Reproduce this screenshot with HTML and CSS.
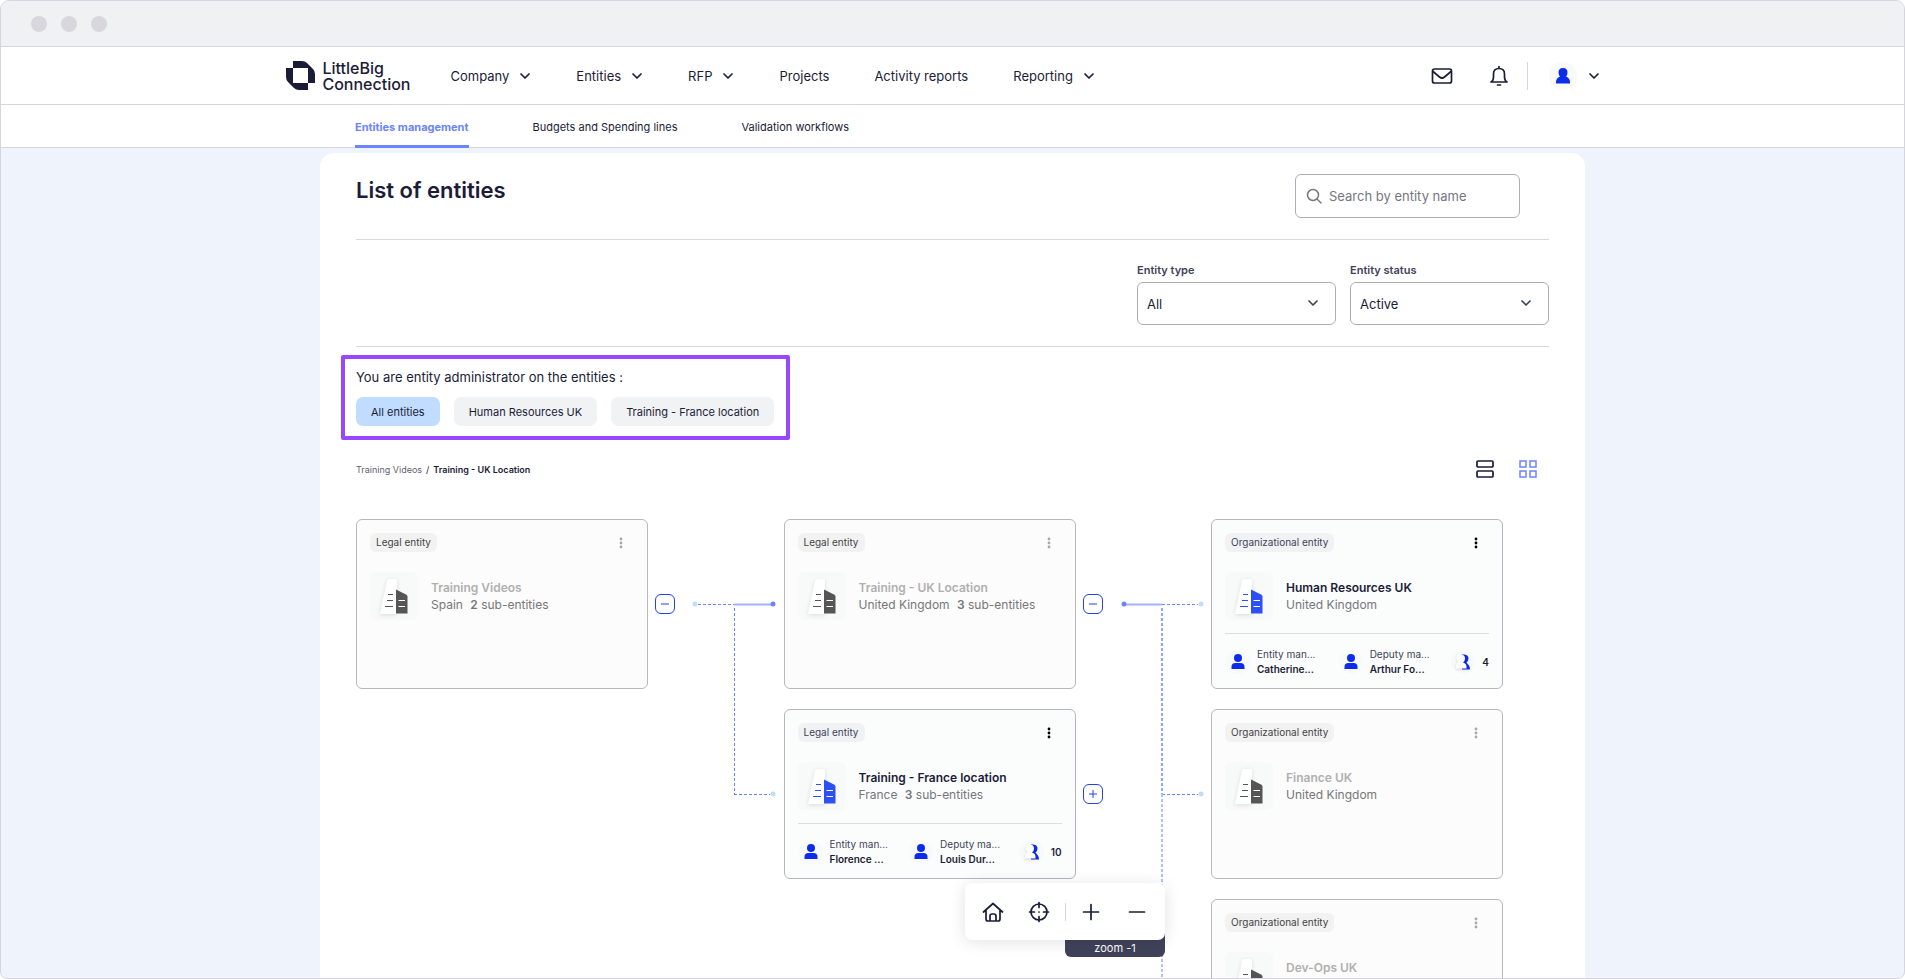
FILE: index.html
```html
<!DOCTYPE html>
<html lang="en">
<head>
    <meta charset="UTF-8">
    <title>List of entities</title>
    <meta name="viewport" content="width=device-width, initial-scale=1.0">
    <link rel="stylesheet" href="styles.css">
</head>
<body>
    <!-- Shared icons -->
    <svg class="sprite" aria-hidden="true">
        <symbol id="chevron" viewBox="0 0 12 12">
            <path d="M2 4l4 4 4-4" fill="none" stroke="currentColor" stroke-width="1.7" stroke-linecap="round" stroke-linejoin="round"/>
        </symbol>
        <symbol id="dots" viewBox="0 0 4 12">
            <circle cx="2" cy="2" r="1.4"/><circle cx="2" cy="6" r="1.4"/><circle cx="2" cy="10" r="1.4"/>
        </symbol>
        <symbol id="building" viewBox="0 0 48 48">
            <path class="tower" d="M17 8.500q.4-1.500 2-1.500h6q2 0 2 2v33H10z"/>
            <path class="block" d="M26 17.500l10 5q1.500.8 1.500 2V41.500H26z"/>
            <path class="floors" d="M18 22.500h5M17 28.500h6M15 34.500h8"/>
            <path class="windows" d="M28.500 28.500h6.500M28.500 34.500h6.500"/>
        </symbol>
        <symbol id="person" viewBox="0 0 24 24">
            <circle cx="12" cy="8" r="4"/>
            <path d="M5.500 19v-2q0-4 4-4h5q4 0 4 4v2z"/>
        </symbol>
        <symbol id="people" viewBox="0 0 24 24">
            <path class="back" d="M11 4.500h2.500q4 .5 4 4 0 2.500-2 4l2.500 3q1 1.500 1 4h-8z"/>
            <path class="front" d="M9.500 4.500q4.500 0 4.500 4 0 2.500-2 4 3.500 1 3.500 4v2H5v-2.500q0-3 2.500-4-2-1.500-2-4 0-3.500 4-3.500z"/>
        </symbol>
    </svg>

    <div class="window">
        <div class="window-bar">
            <span></span><span></span><span></span>
        </div>

        <header class="topbar">
            <a href="#" class="logo">
                <svg width="29" height="29" viewBox="0 0 29 29">
                    <path d="M7 0h9q3 0 5 2l6 6q2 2 2 5v9h-7V7H7z"/>
                    <path d="M0 7h7v15h15v7h-9q-3 0-5-2l-6-6q-2-2-2-5z"/>
                </svg>
                <span>LittleBig<br>Connection</span>
            </a>
            <nav class="menu">
                <a href="#">Company <svg><use href="#chevron"/></svg></a>
                <a href="#">Entities <svg><use href="#chevron"/></svg></a>
                <a href="#">RFP <svg><use href="#chevron"/></svg></a>
                <a href="#">Projects</a>
                <a href="#">Activity reports</a>
                <a href="#">Reporting <svg><use href="#chevron"/></svg></a>
            </nav>
            <div class="account">
                <button type="button" aria-label="Messages">
                    <svg width="22" height="20" viewBox="0 0 22 20" class="line-icon">
                        <rect x="1.500" y="3" width="19" height="14" rx="2"/>
                        <path d="M2 5.500l6.500 5.500q2.500 2 5 0L20 5.500"/>
                    </svg>
                </button>
                <button type="button" aria-label="Notifications">
                    <svg width="20" height="22" viewBox="0 0 20 22" class="line-icon">
                        <path d="M10 1.500v1.500M2 17q2.500-1.500 2.500-5V9q0-5.500 5.500-5.500T15.500 9v3q0 3.500 2.500 5z"/>
                        <path d="M8.500 20h3"/>
                    </svg>
                </button>
                <button type="button" class="profile" aria-label="Profile">
                    <span class="avatar">
                        <svg width="28" height="28" viewBox="0 0 28 28">
                            <path d="M14 6q4.500 0 4.500 4.500 0 2.500-1.500 4 4 1.500 4 5.500v1.500H7V20q0-4 4-5.500-1.500-1.500-1.500-4Q9.500 6 14 6z"/>
                        </svg>
                    </span>
                    <svg class="chevron"><use href="#chevron"/></svg>
                </button>
            </div>
        </header>

        <nav class="tabs">
            <a href="#" class="active">Entities management</a>
            <a href="#">Budgets and Spending lines</a>
            <a href="#">Validation workflows</a>
        </nav>

        <main class="page">
            <div class="page-head">
                <h1>List of entities</h1>
                <label class="search">
                    <svg width="16" height="16" viewBox="0 0 16 16">
                        <circle cx="7" cy="7" r="5.500"/><path d="M11 11l4 4"/>
                    </svg>
                    <input type="search" placeholder="Search by entity name" aria-label="Search by entity name">
                </label>
            </div>

            <div class="filters">
                <div class="field">
                    <label for="type">Entity type</label>
                    <div class="select">
                        <select id="type"><option>All</option></select>
                        <svg><use href="#chevron"/></svg>
                    </div>
                </div>
                <div class="field">
                    <label for="status">Entity status</label>
                    <div class="select">
                        <select id="status"><option>Active</option></select>
                        <svg><use href="#chevron"/></svg>
                    </div>
                </div>
            </div>

            <section class="admin">
                <p>You are entity administrator on the entities :</p>
                <div class="chips">
                    <button type="button" class="chip selected">All entities</button>
                    <button type="button" class="chip">Human Resources UK</button>
                    <button type="button" class="chip">Training - France location</button>
                </div>
            </section>

            <div class="path">
                <div class="breadcrumb">
                    <a href="#">Training Videos</a><span>/</span><strong>Training - UK Location</strong>
                </div>
                <div class="views">
                    <button type="button" aria-label="List view">
                        <svg width="18" height="18" viewBox="0 0 18 18">
                            <rect x="1" y="1" width="16" height="6" rx="1"/><rect x="1" y="11" width="16" height="6" rx="1"/>
                        </svg>
                    </button>
                    <button type="button" class="on" aria-label="Tree view">
                        <svg width="18" height="18" viewBox="0 0 18 18">
                            <rect x="1" y="1" width="6" height="6"/><rect x="11" y="1" width="6" height="6"/>
                            <rect x="1" y="11" width="6" height="6"/><rect x="11" y="11" width="6" height="6"/>
                        </svg>
                    </button>
                </div>
            </div>

            <div class="tree">
                <div class="level">
                    <article class="card disabled">
                        <div class="card-top"><span class="tag">Legal entity</span><button type="button" class="more" aria-label="More"><svg><use href="#dots"/></svg></button></div>
                        <div class="card-main">
                            <svg class="building"><use href="#building"/></svg>
                            <div><h2>Training Videos</h2><p>Spain <span><b>2</b> sub-entities</span></p></div>
                        </div>
                    </article>
                </div>

                <div class="links">
                    <svg class="wires">
                        <path class="dashed" d="M50 85.500h36M86.500 89v186M86 275.500h36"/>
                        <path class="solid" d="M86 85.500h38"/>
                        <circle class="light" cx="47" cy="85" r="2.500"/>
                        <circle class="dark" cx="125" cy="85" r="2.500"/>
                        <circle class="light" cx="125" cy="275" r="2.500"/>
                    </svg>
                    <div class="link"><button type="button" class="toggle" aria-label="Collapse"><svg><path d="M5 9h8"/></svg></button></div>
                </div>

                <div class="level">
                    <article class="card disabled">
                        <div class="card-top"><span class="tag">Legal entity</span><button type="button" class="more" aria-label="More"><svg><use href="#dots"/></svg></button></div>
                        <div class="card-main">
                            <svg class="building"><use href="#building"/></svg>
                            <div><h2>Training - UK Location</h2><p>United Kingdom <span><b>3</b> sub-entities</span></p></div>
                        </div>
                    </article>
                    <article class="card">
                        <div class="card-top"><span class="tag">Legal entity</span><button type="button" class="more" aria-label="More"><svg><use href="#dots"/></svg></button></div>
                        <div class="card-main">
                            <svg class="building"><use href="#building"/></svg>
                            <div><h2>Training - France location</h2><p>France <span><b>3</b> sub-entities</span></p></div>
                        </div>
                        <div class="managers">
                            <div class="manager"><svg><use href="#person"/></svg><p>Entity man...<strong>Florence ...</strong></p></div>
                            <div class="manager"><svg><use href="#person"/></svg><p>Deputy ma...<strong>Louis Dur...</strong></p></div>
                            <div class="manager count"><svg><use href="#people"/></svg><strong>10</strong></div>
                        </div>
                    </article>
                </div>

                <div class="links">
                    <svg class="wires">
                        <path class="dashed" d="M86 85.500h36M86 275.500h36"/>
                        <path class="dashed wide" d="M86 89v186"/>
                        <path class="dashed wide pale" d="M86 275v400"/>
                        <path class="solid" d="M48 85.500h38"/>
                        <circle class="dark" cx="48" cy="85" r="2.500"/>
                        <circle class="light" cx="125" cy="85" r="2.500"/>
                        <circle class="light" cx="125" cy="275" r="2.500"/>
                    </svg>
                    <div class="link"><button type="button" class="toggle" aria-label="Collapse"><svg><path d="M5 9h8"/></svg></button></div>
                    <div class="link"><button type="button" class="toggle" aria-label="Expand"><svg><path d="M5 9h8M9 5v8"/></svg></button></div>
                </div>

                <div class="level">
                    <article class="card">
                        <div class="card-top"><span class="tag">Organizational entity</span><button type="button" class="more" aria-label="More"><svg><use href="#dots"/></svg></button></div>
                        <div class="card-main">
                            <svg class="building"><use href="#building"/></svg>
                            <div><h2>Human Resources UK</h2><p>United Kingdom</p></div>
                        </div>
                        <div class="managers">
                            <div class="manager"><svg><use href="#person"/></svg><p>Entity man...<strong>Catherine...</strong></p></div>
                            <div class="manager"><svg><use href="#person"/></svg><p>Deputy ma...<strong>Arthur Fo...</strong></p></div>
                            <div class="manager count"><svg><use href="#people"/></svg><strong>4</strong></div>
                        </div>
                    </article>
                    <article class="card disabled">
                        <div class="card-top"><span class="tag">Organizational entity</span><button type="button" class="more" aria-label="More"><svg><use href="#dots"/></svg></button></div>
                        <div class="card-main">
                            <svg class="building"><use href="#building"/></svg>
                            <div><h2>Finance UK</h2><p>United Kingdom</p></div>
                        </div>
                    </article>
                    <article class="card disabled">
                        <div class="card-top"><span class="tag">Organizational entity</span><button type="button" class="more" aria-label="More"><svg><use href="#dots"/></svg></button></div>
                        <div class="card-main">
                            <svg class="building"><use href="#building"/></svg>
                            <div><h2>Dev-Ops UK</h2><p>United Kingdom</p></div>
                        </div>
                    </article>
                </div>
            </div>
        </main>

        <!-- Floating zoom controls -->
        <div class="zoombar">
            <div class="tooltip">zoom -1</div>
            <div class="tools">
                <button type="button" aria-label="Home">
                    <svg width="22" height="22" viewBox="0 0 22 22" class="line-icon">
                        <path d="M1.500 11L11 2.500l9.500 8.500M4 9v9q0 2 2 2h10q2 0 2-2V9M8 20v-5q0-2 2-2h2q2 0 2 2v5"/>
                    </svg>
                </button>
                <button type="button" aria-label="Center">
                    <svg width="22" height="22" viewBox="0 0 22 22" class="line-icon">
                        <circle cx="11" cy="11" r="8"/>
                        <path d="M11 1.500v5M11 15.500v5M1.500 11h5M15.500 11h5M11 11h.1"/>
                    </svg>
                </button>
                <hr>
                <button type="button" aria-label="Zoom in">
                    <svg width="22" height="22" viewBox="0 0 22 22" class="line-icon"><path d="M3.500 11h15M11 3.500v15"/></svg>
                </button>
                <button type="button" aria-label="Zoom out">
                    <svg width="22" height="22" viewBox="0 0 22 22" class="line-icon"><path d="M3.500 11h15"/></svg>
                </button>
            </div>
        </div>
    </div>
</body>
</html>
```
FILE: styles.css
```css
* {
    box-sizing: border-box;
}

body {
    margin: 0;
    background: #fff;
    color: #1b1c38;
    font-family: Inter, 'Liberation Sans', sans-serif;
    font-size: 13px;
}

a {
    color: inherit;
    text-decoration: none;
}

h1, h2, p {
    margin: 0;
}

button {
    padding: 0;
    border: 0;
    background: none;
    color: inherit;
    font: inherit;
    cursor: pointer;
}

svg {
    display: block;
    flex: none;
}

.sprite {
    position: absolute;
    width: 0;
    height: 0;
}

.line-icon {
    fill: none;
    stroke: #1b1c38;
    stroke-width: 1.7;
    stroke-linecap: round;
    stroke-linejoin: round;
}

/* Window frame */
.window {
    position: relative;
    display: flex;
    flex-direction: column;
    height: 100vh;
    border: 1px solid #d5d5db;
    border-radius: 9px 9px 7px 7px;
    background: #eff4fc;
    overflow: hidden;
}

.window-bar {
    display: flex;
    flex: none;
    align-items: center;
    gap: 14px;
    height: 46px;
    padding-left: 30px;
    border-bottom: 1px solid #d5d5db;
    background: #f0f1f3;
}

.window-bar span {
    width: 16px;
    height: 16px;
    border-radius: 50%;
    background: #d8d7dd;
}

/* Top navigation */
.topbar {
    display: flex;
    flex: none;
    align-items: center;
    height: 58px;
    padding: 0 16% 0 15%;
    border-bottom: 1px solid #d5d5db;
    background: #fff;
}

.logo {
    display: flex;
    align-items: center;
    gap: 7px;
    font-size: 16px;
    font-weight: 500;
    line-height: 16px;
}

.logo svg {
    fill: #1b1c38;
}

.menu {
    display: flex;
    flex: 1;
    gap: 45px;
    margin-left: 40px;
}

.menu a {
    display: flex;
    align-items: center;
    gap: 10px;
}

.menu svg,
.chevron {
    width: 12px;
    height: 12px;
}

.account {
    display: flex;
    align-items: center;
    gap: 36px;
}

.profile {
    display: flex;
    align-items: center;
    gap: 11px;
    height: 28px;
    margin-left: -18px;
    padding-left: 21px;
    border-left: 1px solid #d5d5db;
}

.avatar {
    border-radius: 50%;
    background: #f8f9f9;
    fill: #0c2bea;
}

/* Tabs */
.tabs {
    display: flex;
    flex: none;
    gap: 64px;
    height: 43px;
    padding-left: 354px;
    border-bottom: 1px solid #d5d5db;
    background: #fff;
    font-size: 11px;
    line-height: 44px;
}

.tabs .active {
    height: 43px;
    border-bottom: 3px solid #6b84ff;
    color: #6b84ff;
    font-weight: 700;
}

/* Page */
.page {
    flex: 1;
    width: calc(100% - 638px);
    min-height: 0;
    margin: 5px auto 0;
    padding: 0 36px;
    border-radius: 14px 14px 0 0;
    background: #fff;
    overflow: hidden;
}

.page-head {
    display: flex;
    justify-content: space-between;
    align-items: flex-start;
    height: 87px;
    padding: 21px 29px 0 0;
    border-bottom: 1px solid #d8d9da;
}

h1 {
    font-size: 22px;
    font-weight: 600;
    line-height: 32px;
}

.search {
    display: flex;
    align-items: center;
    gap: 7px;
    width: 225px;
    height: 44px;
    padding: 0 10px;
    border: 1px solid #adadb8;
    border-radius: 6px;
}

.search svg {
    fill: none;
    stroke: #76767f;
    stroke-width: 1.5;
    stroke-linecap: round;
}

.search input {
    flex: 1;
    min-width: 0;
    padding: 0;
    border: 0;
    outline: 0;
    font: inherit;
}

.search input::placeholder {
    color: #76767f;
}

.filters {
    display: flex;
    justify-content: flex-end;
    gap: 14px;
    height: 107px;
    padding-top: 22px;
    border-bottom: 1px solid #d8d9da;
}

.field label {
    display: block;
    margin-bottom: 4px;
    color: #40425a;
    font-size: 11px;
    font-weight: 600;
    line-height: 16px;
}

.select {
    position: relative;
    width: 199px;
}

.select select {
    width: 100%;
    height: 43px;
    padding: 0 9px;
    border: 1px solid #adadb8;
    border-radius: 6px;
    background: #fff;
    color: #1b1c38;
    font: inherit;
    appearance: none;
}

.select svg {
    position: absolute;
    top: 15px;
    right: 17px;
    width: 12px;
    height: 12px;
    color: #40425a;
}

/* Entities administered by the user */
.admin {
    width: max-content;
    margin: 8px 0 0 -15px;
    padding: 8px 12px 10px 11px;
    border: 4px solid #9747ff;
    border-radius: 2px;
}

.admin p {
    line-height: 20px;
}

.chips {
    display: flex;
    gap: 14px;
    margin-top: 10px;
}

.chip {
    height: 29px;
    padding: 0 15px;
    border-radius: 7px;
    background: #f1f2f4;
    font-size: 11px;
}

.chip.selected {
    background: #c0ddff;
}

.path {
    display: flex;
    justify-content: space-between;
    align-items: center;
    margin-top: 20px;
    padding-right: 12px;
}

.breadcrumb {
    font-size: 9px;
}

.breadcrumb a {
    color: #5e5f70;
}

.breadcrumb span {
    margin: 0 4px;
}

.breadcrumb strong {
    font-weight: 600;
}

.views {
    display: flex;
    gap: 25px;
}

.views svg {
    fill: none;
    stroke: #1b1c38;
    stroke-width: 1.7;
}

.views .on svg {
    stroke: #6b84ff;
    stroke-width: 1.5;
}

/* Entity tree */
.tree {
    display: grid;
    grid-template-columns: 292px 1fr 292px 1fr 292px;
    margin-top: 41px;
    padding-right: 46px;
}

.level,
.links {
    display: flex;
    flex-direction: column;
    gap: 20px;
}

.links {
    position: relative;
}

.link {
    display: flex;
    align-items: center;
    height: 170px;
    padding-left: 7px;
}

.toggle {
    position: relative;
    border: 1px solid #2341f0;
    border-radius: 6px;
    background: #fff;
}

.toggle svg {
    width: 18px;
    height: 18px;
    stroke: #2341f0;
}

.wires {
    position: absolute;
    width: 100%;
    height: 100%;
    overflow: visible;
}

.wires path {
    fill: none;
    stroke: #6b84ff;
}

.wires .dashed {
    stroke-dasharray: 3 2;
}

.wires .wide {
    stroke: #93a5ff;
    stroke-width: 2;
}

.wires .pale {
    stroke: #b3c0ff;
}

.wires .solid {
    stroke: #a3b3ff;
    stroke-width: 2;
}

.wires .dark {
    fill: #6b84ff;
}

.wires .light {
    fill: #c0ddff;
}

.card {
    height: 170px;
    padding: 13px 13px 0;
    border: 1px solid #b5b5bf;
    border-radius: 6px;
    background: #fbfdfd;
}

.card-top {
    display: flex;
    justify-content: space-between;
    align-items: center;
    padding-right: 11px;
}

.tag {
    padding: 0 6px;
    border-radius: 6px;
    background: #f1f2f4;
    color: #40425a;
    font-size: 10px;
    line-height: 19px;
}

.more svg {
    width: 4px;
    height: 12px;
}

.card-main {
    display: flex;
    align-items: center;
    gap: 13px;
    margin-top: 20px;
}

.building {
    width: 48px;
    height: 48px;
    border-radius: 6px;
    background: #f8f9f9;
    color: #2b50f5;
}

.tower {
    fill: #fff;
    filter: drop-shadow(0 1px 2px rgba(0, 0, 0, 0.12));
}

.block {
    fill: currentColor;
}

.floors {
    stroke: currentColor;
}

.windows {
    stroke: #fff;
}

.card h2 {
    font-size: 12px;
    font-weight: 600;
    line-height: 17px;
}

.card-main p {
    color: #76767f;
    font-size: 12px;
    line-height: 17px;
}

.card-main p span {
    margin-left: 4px;
}

.card-main b {
    font-weight: 600;
}

.managers {
    display: flex;
    justify-content: space-between;
    margin-top: 13px;
    padding: 13px 0 0 1px;
    border-top: 1px solid #dcdde0;
}

.manager {
    display: flex;
    align-items: center;
    gap: 7px;
    font-size: 10px;
}

.manager svg {
    width: 24px;
    height: 24px;
    border-radius: 50%;
    background: #f8f9f9;
    fill: #0c2bea;
}

.manager p {
    width: 60px;
    color: #40425a;
    line-height: 15px;
    white-space: nowrap;
}

.manager strong {
    color: #1b1c38;
    font-weight: 600;
}

.manager p strong {
    display: block;
}

.front {
    fill: #fff;
    filter: drop-shadow(0 1px 1px rgba(0, 0, 0, 0.15));
}

/* Cards the user cannot manage */
.card.disabled {
    border-color: #b8b8b8;
    background: #fcfcfc;
}

.disabled .tag {
    background: #f2f2f2;
    color: #444;
}

.disabled h2 {
    color: #b0b0b0;
}

.disabled .more svg {
    fill: #a8a8a8;
}

.disabled .building {
    color: #555;
}

.disabled .card-main p {
    color: #777;
}

/* Zoom controls */
.zoombar {
    position: absolute;
    left: 964px;
    bottom: 21px;
    width: 200px;
    padding-bottom: 17px;
}

.tools {
    position: relative;
    display: flex;
    justify-content: space-between;
    align-items: center;
    height: 57px;
    padding: 0 17px;
    border-radius: 7px;
    background: #fff;
    box-shadow: 0 2px 16px rgba(0, 0, 0, 0.12);
}

.tools hr {
    width: 1px;
    height: 18px;
    margin: 0 -9px;
    border: 0;
    background: #d5d5db;
}

.tooltip {
    position: absolute;
    right: 0;
    bottom: 0;
    width: 100px;
    padding-top: 12px;
    border-radius: 6px;
    background: #40425a;
    color: #fff;
    font-size: 11px;
    line-height: 17px;
    text-align: center;
}
```
